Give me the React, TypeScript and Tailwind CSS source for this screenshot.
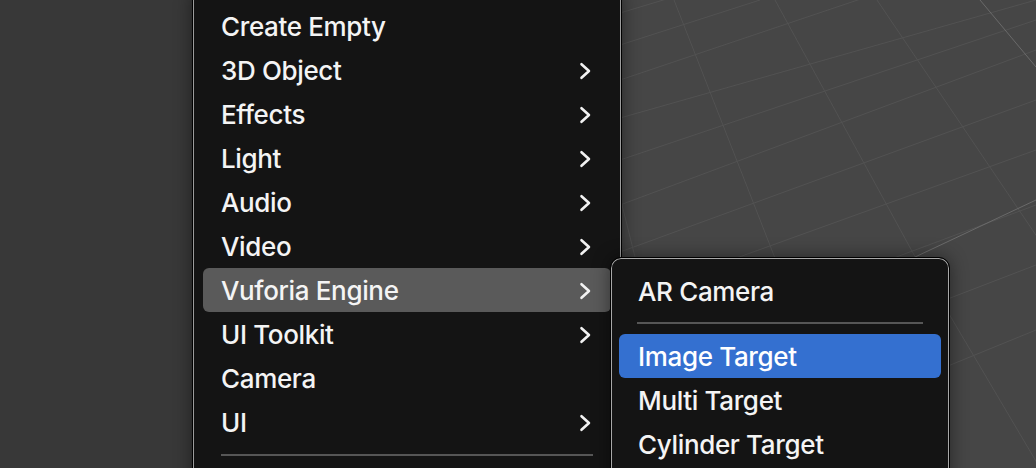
import React from "react";

type Item = { label: string; sub?: boolean; active?: boolean };

const mainItems: Item[] = [
  { label: "Create Empty" },
  { label: "3D Object", sub: true },
  { label: "Effects", sub: true },
  { label: "Light", sub: true },
  { label: "Audio", sub: true },
  { label: "Video", sub: true },
  { label: "Vuforia Engine", sub: true, active: true },
  { label: "UI Toolkit", sub: true },
  { label: "Camera" },
  { label: "UI", sub: true },
];

function Chevron() {
  return (
    <svg width="13" height="18" viewBox="0 0 13 18" fill="none">
      <path d="M2.5 2.2 L10 9 L2.5 15.8" stroke="#f2f2f2" strokeWidth="2.6" strokeLinecap="round" strokeLinejoin="round" />
    </svg>
  );
}

function Grid() {
  const lines: [number, number, number, number, number][] = [
    [571, 0, 634, 253, 0.5],
    [674, 0, 773, 253, 0.5],
    [775, 0, 913, 253, 0.5],
    [877, 0, 1048, 253, 0.5],
    [773, 253, 860, 468, 0.5],
    [913, 253, 1040, 468, 0.5],
    [634, 253, 690, 468, 0.5],
    [620, 13, 680, -5, 0.5],
    [620, 45, 760, 0, 0.5],
    [620, 80, 1036, -60, 0.5],
    [620, 118, 1036, 0, 0.5],
    [620, 160, 1036, 20, 0.5],
    [620, 205, 1036, 50, 0.5],
    [620, 252, 1036, 100, 0.5],
    [620, 300, 1036, 150, 0.5],
    [620, 360, 1036, 205, 0.5],
    [620, 425, 1036, 265, 0.5],
    [620, 500, 1036, 330, 0.5],
    [980, 0, 1036, 67, 1],
    [913, 258, 1036, 200, 1],
    [700, 360, 913, 258, 1],
  ];
  return (
    <svg className="absolute inset-0" width="1036" height="468" viewBox="0 0 1036 468">
      {lines.map(([x1, y1, x2, y2, o], i) => (
        <line
          key={i}
          x1={x1}
          y1={y1}
          x2={x2}
          y2={y2}
          stroke={o === 1 ? "#6a6a6a" : "#525252"}
          strokeWidth={1}
        />
      ))}
    </svg>
  );
}

const txt = "text-[26px] font-[450] leading-none tracking-[-0.35px]";

export default function App() {
  return (
    <div
      className="relative w-[1036px] h-[468px] overflow-hidden flex"
      style={{ fontFamily: "Inter, 'Noto Sans', sans-serif" }}
    >
      <div className="w-[400px] h-full bg-[#383838]" />
      <div className="flex-1 h-full bg-[#464646]" />
      <Grid />

      {/* main menu */}
      <div className="absolute left-[192px] top-[-10px] w-[430px] rounded-[10px] border border-black bg-[#141414] shadow-[inset_0_0_0_1px_#9c9c9c,0_0_18px_rgba(0,0,0,0.45)] pt-[13px] px-[10px] pb-[40px]">
        {mainItems.map((it) => (
          <div
            key={it.label}
            className={
              "h-[44px] flex items-center justify-between pl-[18px] pr-[19px] pt-[2px] rounded-[6px] " +
              (it.active ? "bg-[#5a5a5a]" : "")
            }
          >
            <span className={txt + " text-[#f4f4f4]"}>{it.label}</span>
            {it.sub && <Chevron />}
          </div>
        ))}
        <div className="mt-[10px] mx-[18px] h-[2px] bg-[#565656]" />
      </div>

      {/* submenu */}
      <div className="absolute left-[610px] top-[257px] w-[340px] rounded-[11px] border border-black bg-[#141414] shadow-[inset_0_0_0_1px_#a8a8a8,0_0_18px_rgba(0,0,0,0.45)] pt-[11px] px-[8px] pb-[20px]">
        <div className="h-[44px] flex items-center pl-[19px] pt-[2px]">
          <span className={txt + " text-[#f4f4f4]"}>AR Camera</span>
        </div>
        <div className="mt-[9px] mb-[10px] mx-[18px] h-[2px] bg-[#565656]" />
        <div className="h-[44px] flex items-center pl-[19px] pt-[2px] rounded-[6px] bg-[#3470d0]">
          <span className={txt + " text-white"}>Image Target</span>
        </div>
        <div className="h-[44px] flex items-center pl-[19px] pt-[2px]">
          <span className={txt + " text-[#f4f4f4]"}>Multi Target</span>
        </div>
        <div className="h-[44px] flex items-center pl-[19px] pt-[2px]">
          <span className={txt + " text-[#f4f4f4]"}>Cylinder Target</span>
        </div>
      </div>
    </div>
  );
}
